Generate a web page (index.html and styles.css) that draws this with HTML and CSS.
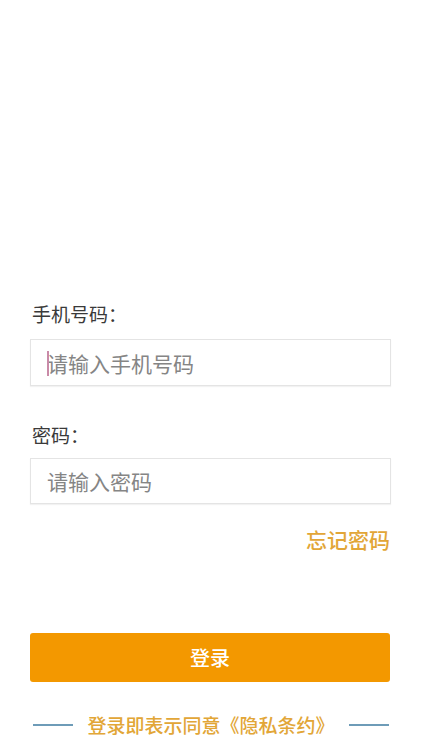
FILE: index.html
```html
<!DOCTYPE html>
<html lang="zh">
<head>
<meta charset="utf-8">
<title>登录</title>
<link rel="stylesheet" href="styles.css">
</head>
<body>
<main class="page">
  <form class="login">
    <label class="label label-phone">手机号码：</label>
    <div class="field field-phone">
      <span class="caret"></span>
      <input class="input" type="text" placeholder="请输入手机号码">
    </div>
    <label class="label label-pwd">密码：</label>
    <div class="field field-pwd">
      <input class="input" type="password" placeholder="请输入密码">
    </div>
    <div class="forgot-row"><a class="forgot">忘记密码</a></div>
    <button class="btn" type="button">登录</button>
    <div class="agree">
      <span class="rule"></span>
      <span class="agree-text">登录即表示同意《隐私条约》</span>
      <span class="rule"></span>
    </div>
  </form>
</main>
</body>
</html>
```
FILE: styles.css
```css
* { box-sizing: border-box; }
html, body { margin: 0; padding: 0; background: #fff; }
body {
  font-family: "Noto Sans CJK SC", "Noto Sans", sans-serif;
  width: 431px;
  height: 747px;
  overflow: hidden;
}
.page { padding: 300px 40px 0 30px; }
.login { display: flex; flex-direction: column; }
.label {
  display: block;
  font-size: 19px;
  line-height: 28px;
  height: 28px;
  color: #3a3a3a;
  padding-left: 2px;
}
.label-pwd { margin-top: 35px; }
.field {
  position: relative;
  border: 1px solid #e4e4e4;
  box-shadow: 0 1px 1px rgba(0,0,0,0.05);
  background: #fff;
  margin-top: 11px;
  height: 47px;
  display: flex;
  align-items: center;
}
.field-pwd { margin-top: 9px; height: 46px; }
.input {
  border: none;
  outline: none;
  background: transparent;
  width: 100%;
  height: 100%;
  padding: 0 0 0 16px;
  font-family: inherit;
  font-size: 21px;
  color: #333;
}
.input::placeholder { color: #858585; }
.caret {
  position: absolute;
  left: 16px;
  top: 11px;
  width: 2px;
  height: 25px;
  background: #c98aa8;
}
.forgot-row {
  display: flex;
  justify-content: flex-end;
  margin-top: 21px;
  height: 28px;
}
.forgot {
  font-size: 21px;
  line-height: 28px;
  font-weight: 500;
  color: #e2a637;
  padding-right: 1px;
}
.btn {
  margin-top: 80px;
  height: 49px;
  width: 360px;
  border: none;
  border-radius: 3px;
  background: #f39800;
  color: #fff;
  font-family: inherit;
  font-size: 20px;
  font-weight: 500;
}
.agree {
  margin-top: 29px;
  height: 28px;
  display: flex;
  align-items: center;
  justify-content: space-between;
  padding: 0 2px 0 3px;
}
.rule {
  width: 40px;
  height: 2px;
  background: #6e9cb8;
}
.agree-text {
  font-size: 19px;
  line-height: 28px;
  font-weight: 500;
  color: #e2a637;
}
```
